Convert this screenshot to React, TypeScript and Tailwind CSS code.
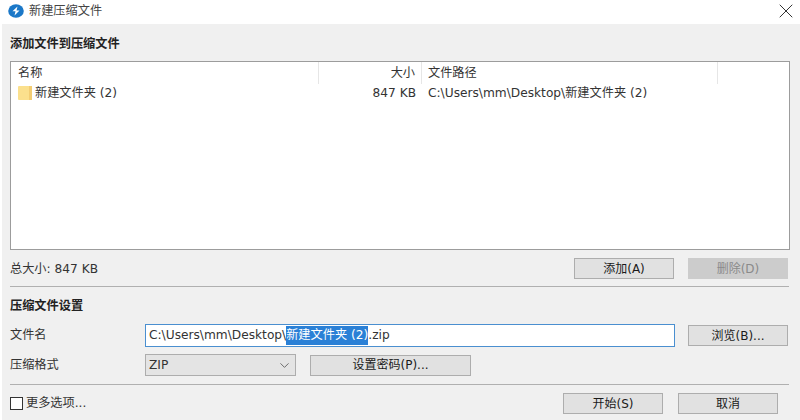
import { ChevronDown, X } from "lucide-react";

const font = "[font-family:'DejaVu_Sans','Noto_Sans_CJK_SC',sans-serif]";

function Btn({ label, className = "", disabled = false }: { label: string; className?: string; disabled?: boolean }) {
  return (
    <div
      className={
        "flex h-[21px] w-[100px] items-center justify-center border text-[12px] " +
        (disabled
          ? "border-[#cccccc] bg-[#cccccc] text-[#8a8a8a] "
          : "border-[#adadad] bg-[#e1e1e1] text-[#1a1a1a] ") +
        className
      }
    >
      {label}
    </div>
  );
}

export default function App() {
  return (
    <div className={"flex h-[420px] w-[800px] flex-col overflow-hidden bg-white text-[12.2px] text-[#333333] " + font}>
      {/* title bar */}
      <div className="flex h-[24px] shrink-0 items-center pb-[2px] pl-[8px] pr-[2px]">
        <svg width="16" height="14" viewBox="0 0 16 14">
          <ellipse cx="8" cy="7" rx="7.8" ry="6.8" fill="#1b78c8" />
          <path d="M9.5 2.5 L4.5 7.2 H7.5 L6.5 11.5 L11.5 6.5 H8.5 Z" fill="#ffffff" />
        </svg>
        <span className="ml-[5px] text-[#444444]">新建压缩文件</span>
        <X className="ml-auto h-[24px] w-[24px] text-[#333333]" strokeWidth={1} />
      </div>

      {/* body */}
      <div className="ml-[2px] flex min-h-0 flex-1 flex-col bg-[#f0f0f0] pb-[2px] pl-[8px] pr-[10px]">
        <div className="flex h-[37px] shrink-0 items-center pt-[3px] font-bold text-[#222222]">添加文件到压缩文件</div>

        {/* file list */}
        <div className="h-[189px] shrink-0 border border-[#9c9c9c] bg-white">
          <div className="flex h-[22px] items-center">
            <div className="flex h-full w-[308px] items-center border-r border-[#e6e6e6] pl-[7px]">名称</div>
            <div className="flex h-full w-[103px] items-center justify-end border-r border-[#e6e6e6] pr-[6px]">大小</div>
            <div className="flex h-full w-[296px] items-center border-r border-[#e6e6e6] pl-[6px]">文件路径</div>
          </div>
          <div className="flex h-[17px] items-center">
            <div className="flex w-[308px] items-center pl-[7px]">
              <svg width="14" height="14" viewBox="0 0 14 14" className="shrink-0">
                <rect x="0" y="0" width="14" height="14" rx="1" fill="#fbe08d" />
                <rect x="11" y="0" width="3" height="14" fill="#f3cd73" />
              </svg>
              <span className="ml-[3px] pt-[1px]">新建文件夹 (2)</span>
            </div>
            <div className="w-[103px] pr-[6px] pt-[1px] text-right">847 KB</div>
            <div className="pl-[6px] pt-[1px]">C:\Users\mm\Desktop\新建文件夹 (2)</div>
          </div>
        </div>

        {/* total + add/delete */}
        <div className="mt-[8px] flex shrink-0 items-center pr-[2px]">
          <span className="pt-[1px]">总大小: 847 KB</span>
          <Btn label="添加(A)" className="ml-auto" />
          <Btn label="删除(D)" disabled className="ml-[14px]" />
        </div>

        <div className="mr-[1px] mt-[7px] h-px shrink-0 bg-[#b0b0b0]" />

        <div className="mt-[12px] shrink-0 font-bold leading-[14px] text-[#222222]">压缩文件设置</div>

        {/* file name */}
        <div className="mt-[11px] flex shrink-0 items-center">
          <span className="w-[135px]">文件名</span>
          <div className="flex h-[23px] w-[530px] items-center whitespace-pre border border-[#4a8fd0] bg-white pl-[3px]">
            C:\Users\mm\Desktop\
            <span className="bg-[#2a80d6] text-white">新建文件夹 (2)</span>
            .zip
          </div>
          <Btn label="浏览(B)..." className="ml-[13px]" />
        </div>

        {/* format + password */}
        <div className="mt-[7px] flex shrink-0 items-center">
          <span className="w-[135px]">压缩格式</span>
          <div className="flex h-[22px] w-[151px] items-center border border-[#adadad] bg-[#e4e4e4] pl-[3px] pr-[3px]">
            ZIP
            <ChevronDown className="ml-auto h-[15px] w-[15px] text-[#444444]" strokeWidth={1.2} />
          </div>
          <Btn label="设置密码(P)..." className="ml-[14px] !w-[161px]" />
        </div>

        <div className="mr-[1px] mt-[8px] h-px shrink-0 bg-[#b0b0b0]" />

        {/* footer */}
        <div className="mt-[8px] flex shrink-0 items-center">
          <div className="h-[13px] w-[13px] border border-[#333333] bg-white" />
          <span className="ml-[3px]">更多选项...</span>
          <Btn label="开始(S)" className="ml-auto" />
          <Btn label="取消" className="ml-[15px] mr-[12px]" />
        </div>
      </div>
    </div>
  );
}
